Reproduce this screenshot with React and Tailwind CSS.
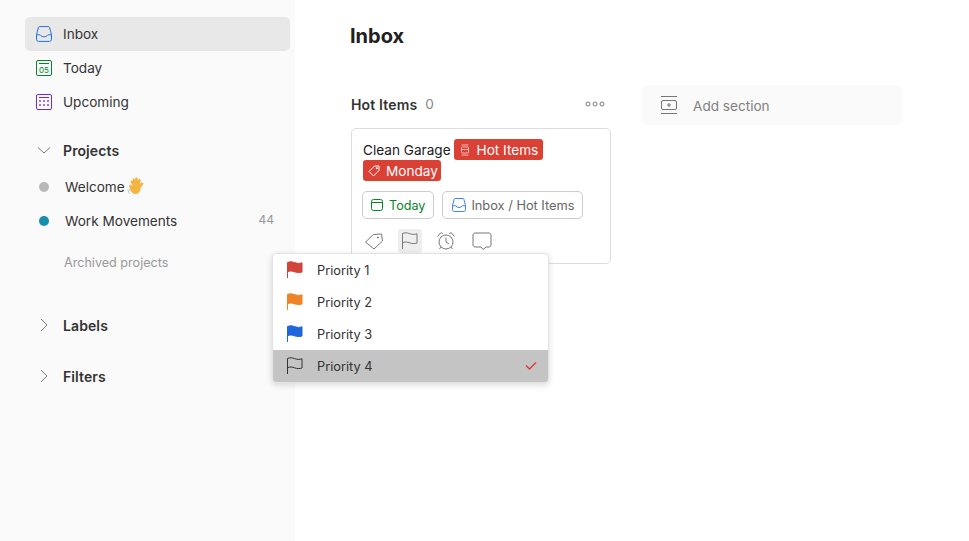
import React from "react";

const S = ({ children, size = 24, box = 24, className = "", sw = 1 }) => (
  <svg width={size} height={size} viewBox={`0 0 ${box} ${box}`} fill="none" stroke="currentColor" strokeWidth={sw} className={className}>
    {children}
  </svg>
);

const InboxIcon = ({ size = 16, sw = 1 }) => (
  <S size={size} box={16} sw={sw}>
    <path d="M3.600.6h8.800c.6 0 1 .3 1.200.9l1.900 7.200v4.500c0 1.200-.9 2.200-2.100 2.200H2.600C1.400 15.400.5 14.400.5 13.200V8.700l1.900-7.200c.2-.6.6-.9 1.200-.9z" />
    <path d="M.6 8.800h3.200c.3 0 .5.100.7.400.7 1 1.900 1.600 3.500 1.600s2.800-.6 3.500-1.600c.2-.3.4-.4.700-.4h3.200" />
  </S>
);

const Flag = ({ fill, stroke, size = 18 }) => (
  <svg width={size} height={size} viewBox="0 0 18 18" fill={fill || "none"} stroke={stroke || fill} strokeWidth="1">
    <path d="M1.500 17V1.500C4 .4 6 .7 8.500 1.600c2.500.9 5 1.100 7.500.2V11c-2.500.9-5 .7-7.500-.2-2.500-.9-4.500-1.200-7-.1" />
  </svg>
);

const Chevron = ({ open }) => (
  <svg width="16" height="16" viewBox="0 0 16 16" fill="none" stroke="#777" strokeWidth="1">
    {open ? <path d="M2 5.500 8 11l6-5.500" /> : <path d="M5 2 11 8l-6 6" />}
  </svg>
);

const NavRow = ({ icon, label, active }) => (
  <div className={`flex items-center h-[34px] pl-[11px] rounded-[5px] ${active ? "bg-[#e8e8e8]" : ""}`}>
    <span className="w-[16px] h-[16px] flex mr-[11px]">{icon}</span>
    <span className="text-[13.6px] text-[#333]">{label}</span>
  </div>
);

const Section = ({ label, open, className = "" }) => (
  <div className={`flex items-center pl-[11px] h-[20px] ${className}`}>
    <span className="w-[16px] flex mr-[11px]"><Chevron open={open} /></span>
    <span className="text-[14px] font-semibold text-[#333] tracking-[0.1px]">{label}</span>
  </div>
);

const Hand = () => (
  <svg width="21" height="21" viewBox="0 0 19 19" className="ml-[2px] -mt-[2px]">
    <path d="M5 8 3.600 5.600c-.5-.9.8-1.700 1.400-.8L6 6.200 5.300 3.500c-.3-1 1.200-1.500 1.600-.4l1 2.600-.2-3.300C7.700 1.300 9.200 1.200 9.400 2.300l.5 3.400.6-2.300c.3-1 1.700-.6 1.500.4l-.5 3.900 1.600-1.400c.8-.7 2 .3 1.200 1.200l-2.200 3.200c-.2 3.600-2.600 6.200-5.400 5.200C4.400 15.700 3.100 12 2.300 9.300 2 8.200 3.300 7.600 3.900 8.500L5.100 10.300z" fill="#f5b63f" stroke="#e59a20" strokeWidth=".4" />
    <path d="M.8 12.500c.2 1.500.8 2.700 1.800 3.700M1.800 11.500c.2 1 .6 1.800 1.200 2.500" stroke="#b9c3cc" strokeWidth=".8" fill="none" />
  </svg>
);

const Project = ({ color, label, count, hand, className = "" }) => (
  <div className={`flex items-center h-[34px] pl-[14px] pr-[16px] ${className}`}>
    <span className="w-[10px] h-[10px] rounded-full mr-[16px]" style={{ backgroundColor: color }} />
    <span className="text-[13.6px] text-[#333]">{label}</span>
    {hand && <Hand />}
    {count && <span className="ml-auto text-[12px] text-[#999] mb-[2px]">{count}</span>}
  </div>
);

const Tag = ({ icon, label, className = "", labelClass = "ml-[5px]" }) => (
  <span className={`inline-flex items-center h-[21px] rounded-[3px] bg-[#db4035] text-white pl-[5px] text-[13.6px] ${className}`}>
    {icon}
    <span className={`${labelClass} h-[21px] leading-[23px]`}>{label}</span>
  </span>
);

const Chip = ({ icon, label, color, className = "" }) => (
  <span className={`inline-flex items-center h-[28px] rounded-[5px] border border-[#ccc] pl-[7px] pr-[8px] ${className}`} style={{ color }}>
    {icon}
    <span className="mt-[2px]">{label}</span>
  </span>
);

const PriorityRow = ({ flag, label, active }) => (
  <div className={`flex items-center h-[32px] pl-[13px] pr-[10px] ${active ? "bg-[#c4c4c4]" : ""}`}>
    <span className="flex w-[18px] mr-[13px]">{flag}</span>
    <span className="text-[12.8px] text-[#333] mt-[2px]">{label}</span>
    {active && (
      <svg className="ml-auto" width="14" height="14" viewBox="0 0 14 14" fill="none" stroke="#db4035" strokeWidth="1.500">
        <path d="M2 6.500 5.500 10 12 3.500" />
      </svg>
    )}
  </div>
);

export default function App() {
  return (
    <div className="flex w-[969px] h-[541px] overflow-hidden bg-white [font-family:Inter,'Noto_Sans',sans-serif] relative">
      <aside className="w-[295px] shrink-0 bg-[#fafafa] pt-[17px] pl-[25px] pr-[5px]">
        <NavRow active label="Inbox" icon={<span className="text-[#246fe0] flex"><InboxIcon /></span>} />
        <NavRow label="Today" icon={
          <svg width="16" height="16" viewBox="0 0 16 16" fill="none">
            <rect x=".5" y=".5" width="15" height="15" rx="1.500" stroke="#058527" />
            <path d="M3 3.500h10" stroke="#058527" />
            <text x="8" y="12.500" textAnchor="middle" fontSize="8" fill="#058527" fontFamily="Inter">05</text>
          </svg>
        } />
        <NavRow label="Upcoming" icon={
          <svg width="16" height="16" viewBox="0 0 16 16" fill="none">
            <rect x=".5" y=".5" width="15" height="15" rx="1.500" stroke="#692fc2" />
            <path d="M3 3.500h10" stroke="#692fc2" />
            <g fill="#a970ff">
              <rect x="3" y="6" width="2" height="2" /><rect x="7" y="6" width="2" height="2" /><rect x="11" y="6" width="2" height="2" />
              <rect x="3" y="10" width="2" height="2" /><rect x="7" y="10" width="2" height="2" /><rect x="11" y="10" width="2" height="2" />
            </g>
          </svg>
        } />
        <Section open label="Projects" className="mt-[21px]" />
        <Project color="#b8b8b8" label="Welcome" hand className="mt-[10px]" />
        <Project color="#158fad" label="Work Movements" count="44" />
        <div className="pl-[39px] mt-[16px] text-[12.6px] text-[#999] leading-[18px]">Archived projects</div>
        <Section label="Labels" className="mt-[43px]" />
        <Section label="Filters" className="mt-[31px]" />
      </aside>

      <main className="flex-1 pl-[55px] pt-[24px]">
        <h1 className="text-[20px] leading-[25px] font-bold text-[#202020]">Inbox</h1>
        <div className="flex mt-[46px] items-start">
          <section className="w-[260px] ml-px">
            <div className="flex items-center h-[20px] -mt-px">
              <span className="text-[14px] font-semibold text-[#333] tracking-[0.15px]">Hot Items</span>
              <span className="ml-[8px] text-[13.6px] text-[#888]">0</span>
              <svg className="ml-auto mr-[6px]" width="20" height="6" viewBox="0 0 20 6" fill="none" stroke="#777">
                <circle cx="3" cy="3" r="2" /><circle cx="10" cy="3" r="2" /><circle cx="17" cy="3" r="2" />
              </svg>
            </div>
            <div className="mt-[14px] h-[136px] border border-[#ddd] rounded-[5px] bg-white pl-[11px] pt-[10px]">
              <div className="flex flex-wrap items-start w-[240px] text-[13.6px] text-[#202020]">
                <span className="mr-[3px] h-[21px] leading-[23px]">Clean Garage</span>
                <Tag label="Hot Items" labelClass="ml-[6px]" className="pr-[5px]" icon={
                  <svg width="12" height="12" viewBox="0 0 12 12" fill="none" stroke="#fff" strokeWidth=".8" opacity=".8">
                    <rect x="2.500" y="3" width="7" height="6" rx=".8" /><path d="M2.500 1h7M2.500 11h7M2.500 5.500h7" />
                  </svg>
                } />
                <Tag label="Monday" className="pr-[3px]" icon={
                  <svg width="13" height="13" viewBox="0 0 13 13" fill="none" stroke="#fff" strokeWidth="1">
                    <path d="M1 7.500 6.500 2H11v4.500L5.500 12z" strokeLinejoin="round" /><circle cx="8.800" cy="4.200" r=".6" fill="#fff" />
                  </svg>
                } />
              </div>
              <div className="flex gap-[8px] mt-[10px] -ml-px">
                <Chip color="#058527" label="Today" className="text-[12.6px]" icon={
                  <svg className="mr-[5px]" width="14" height="14" viewBox="0 0 14 14" fill="none" stroke="#058527">
                    <rect x="1.500" y="1.500" width="11" height="11" rx="2" /><path d="M1.500 4.500h11" />
                  </svg>
                } />
                <Chip color="#666" label="Inbox / Hot Items" className="text-[12.8px]" icon={<span className="text-[#246fe0] flex mr-[5px] ml-[2px]"><InboxIcon size={14} /></span>} />
              </div>
              <div className="flex items-center mt-[10px] text-[#777] -ml-px">
                <span className="flex w-[24px] h-[24px] items-center justify-center">
                  <svg width="20" height="20" viewBox="0 0 20 20" fill="none" stroke="#777">
                    <path d="M1.500 11 9.500 3.500 17.500 3l1 7-8.500 8z" strokeLinejoin="round" /><circle cx="14" cy="6.500" r=".6" fill="#777" />
                  </svg>
                </span>
                <span className="flex w-[24px] h-[24px] ml-[12px] items-center justify-center rounded-[3px] bg-[#eee]">
                  <Flag stroke="#777" />
                </span>
                <span className="flex w-[24px] h-[24px] ml-[12px] items-center justify-center">
                  <svg width="20" height="20" viewBox="0 0 20 20" fill="none" stroke="#777">
                    <circle cx="10" cy="11" r="7" /><path d="M10 6.500V11l3 2M1.500 5.500 4.500 2c1-.6 2 .2 2.500 1M18.500 5.500 15.500 2c-1-.6-2 .2-2.500 1M5 16l-1.500 2M15 16l1.500 2" />
                  </svg>
                </span>
                <span className="flex w-[24px] h-[24px] ml-[12px] items-center justify-center">
                  <svg width="20" height="20" viewBox="0 0 20 20" fill="none" stroke="#777">
                    <path d="M3 2h14c1 0 2 .8 2 2v10c0 1-.8 2-2 2h-3l-3 2.500L9 16H3c-1 0-2-.8-2-2V4c0-1.200 1-2 2-2z" strokeLinejoin="round" />
                  </svg>
                </span>
              </div>
            </div>
          </section>
          <div className="ml-[31px] -mt-[10px] w-[260px] h-[40px] rounded-[5px] bg-[#fafafa] flex items-center pl-[18px] text-[13.6px] text-[#808080]">
            <svg className="mr-[15px]" width="18" height="18" viewBox="0 0 18 18" fill="none" stroke="#777">
              <path d="M1 .5h16M1 17.500h16" /><rect x="1.500" y="4.500" width="15" height="9" rx="1.500" /><path d="M9 7v4M7 9h4" />
            </svg>
            <span className="mt-[2px]">Add section</span>
          </div>
        </div>
      </main>

      <div className="absolute left-[272px] top-[253px] w-[277px] bg-white border border-[#e3e3e3] rounded-[4px] shadow-[0_2px_6px_rgba(0,0,0,0.15)] overflow-hidden">
        <PriorityRow label="Priority 1" flag={<Flag fill="#d1453b" />} />
        <PriorityRow label="Priority 2" flag={<Flag fill="#ee8426" />} />
        <PriorityRow label="Priority 3" flag={<Flag fill="#1f66dc" />} />
        <PriorityRow active label="Priority 4" flag={<Flag stroke="#333" />} />
      </div>
    </div>
  );
}
